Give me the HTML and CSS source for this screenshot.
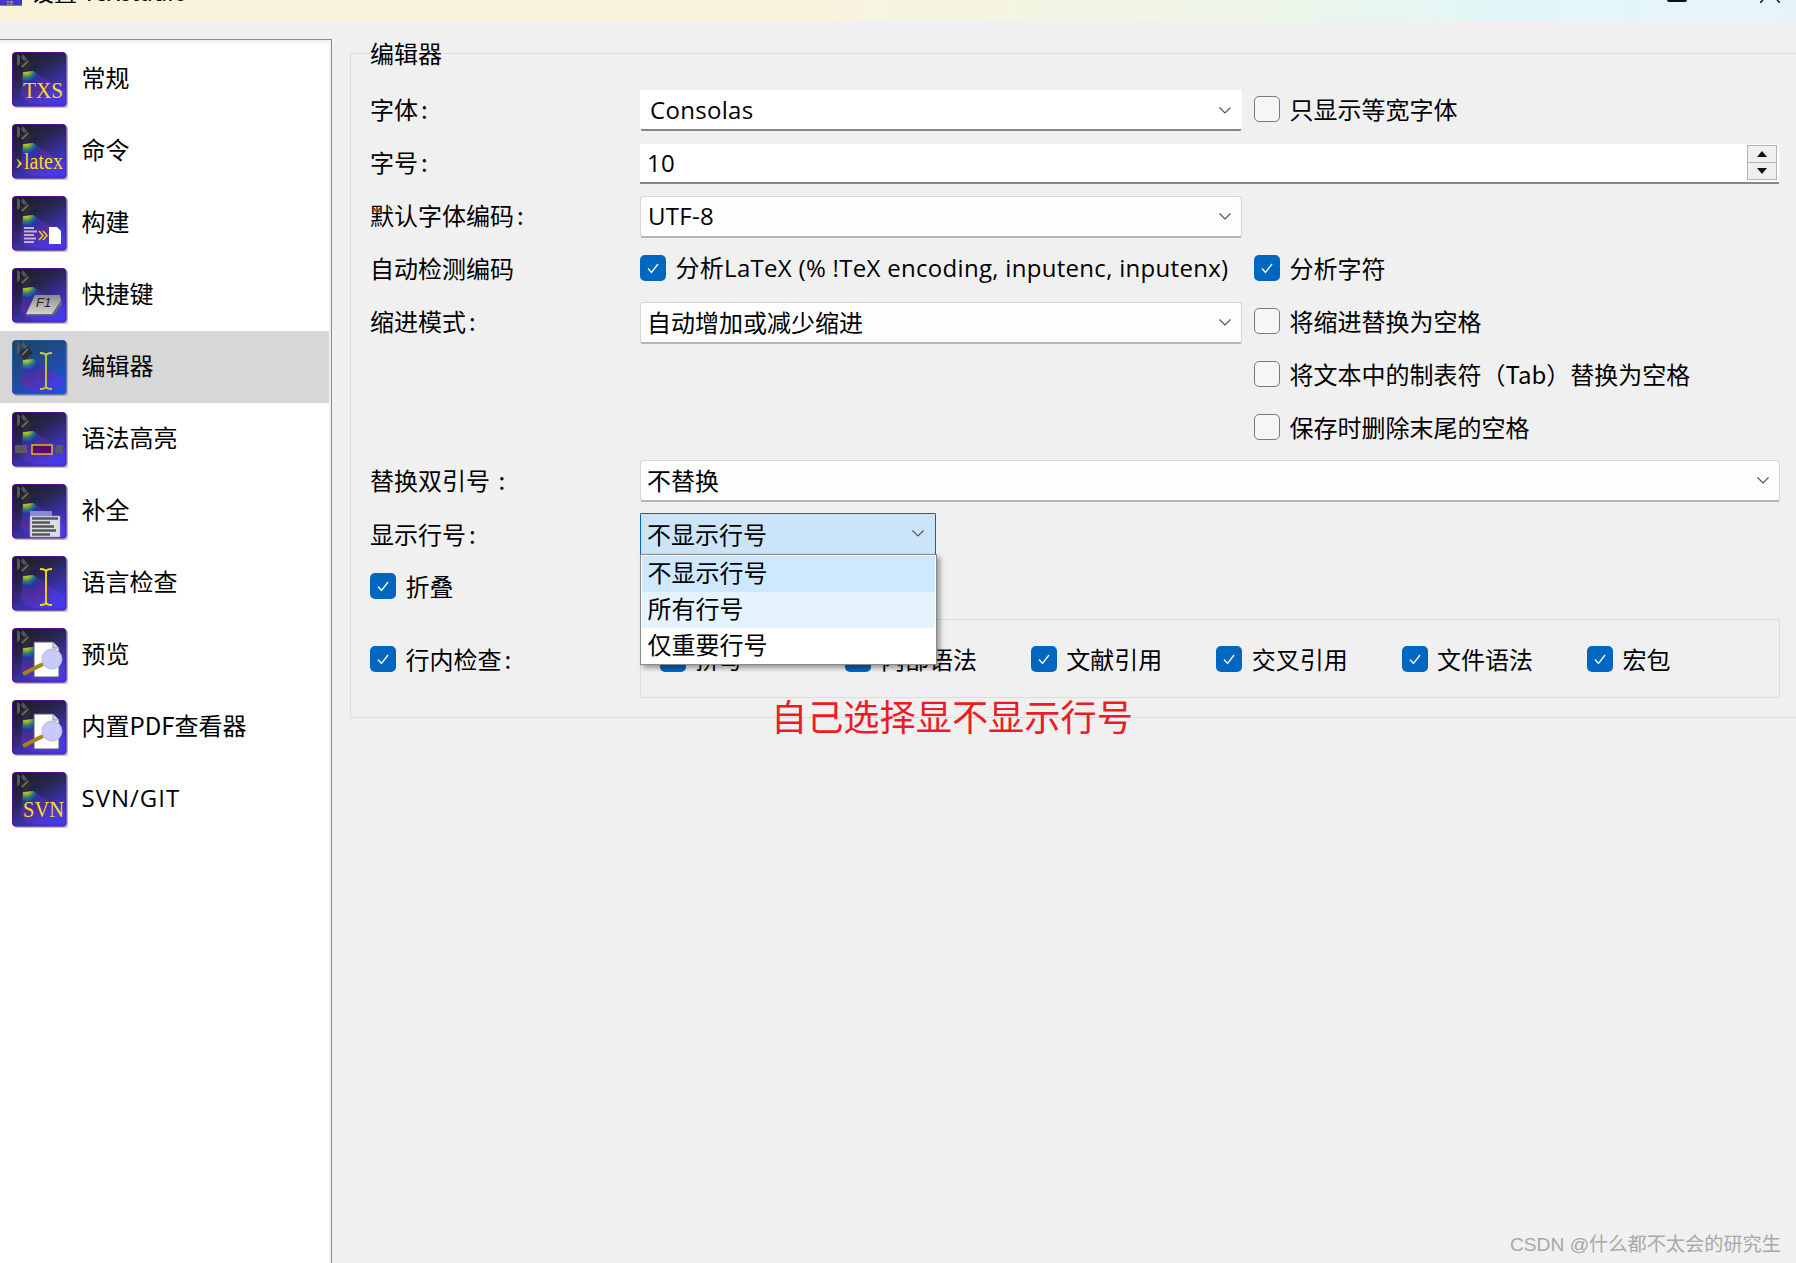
FILE: index.html
```html
<!DOCTYPE html>
<html lang="zh-CN">
<head>
<meta charset="utf-8">
<title>设置 TeXstudio</title>
<link rel="stylesheet" href="styles.css">
</head>
<body>
<svg class="defs" width="0" height="0" aria-hidden="true">
  <defs>
    <linearGradient id="bg" x1="0.15" y1="0" x2="0.75" y2="1">
      <stop offset="0" stop-color="#1d1d20"/><stop offset="0.35" stop-color="#26244a"/><stop offset="0.7" stop-color="#3a32a8"/><stop offset="1" stop-color="#4438ea"/>
    </linearGradient>
    <linearGradient id="bgsel" x1="0.15" y1="0" x2="0.75" y2="1">
      <stop offset="0" stop-color="#1c4560"/><stop offset="0.4" stop-color="#1f4a8c"/><stop offset="1" stop-color="#2150d8"/>
    </linearGradient>
    <radialGradient id="beam" gradientUnits="userSpaceOnUse" cx="14" cy="17" r="38">
      <stop offset="0.05" stop-color="#f4f414"/><stop offset="0.14" stop-color="#b0d820"/><stop offset="0.23" stop-color="#2a8a90"/><stop offset="0.34" stop-color="#2c34b0"/><stop offset="0.6" stop-color="#5c2a9c"/><stop offset="1" stop-color="#4a3ae0"/>
    </radialGradient>
    <linearGradient id="key" x1="0" y1="0" x2="0" y2="1">
      <stop offset="0" stop-color="#8a8a8a"/><stop offset="1" stop-color="#d4d4d4"/>
    </linearGradient>
    <symbol id="lamp" viewBox="0 0 56 56">
      <path d="M11 20 L9 42 Q12 52 30 52 Q46 52 53 42 L53 40 L21 19 Z" fill="url(#beam)" fill-opacity="0.8"/>
      <path d="M5 2 V14 L8 12 V4 Z M11 2 L18 11 L15 13 L9 5 Z" fill="#55555e"/>
      <path d="M7 12 L16 7 L21 13 L12 20 Z" fill="#2c2c32"/>
      <path d="M10 15 L16 9" stroke="#78787f" stroke-width="1.5"/>
    </symbol>
    <symbol id="base" viewBox="0 0 56 56">
      <rect x="2" y="2" width="54" height="54" rx="3" fill="#b8b8c0"/>
      <rect x="0.5" y="0.5" width="53.5" height="53.5" rx="3" fill="url(#bg)" stroke="#5a0a8c"/>
      <use href="#lamp" width="56" height="56"/>
    </symbol>
    <symbol id="basesel" viewBox="0 0 56 56">
      <rect x="2" y="2" width="54" height="54" rx="3" fill="#a9a9b2"/>
      <rect x="0.5" y="0.5" width="53.5" height="53.5" rx="3" fill="url(#bgsel)" stroke="#2a50a0"/>
      <use href="#lamp" width="56" height="56"/>
    </symbol>
    <symbol id="ibeam" viewBox="0 0 56 56">
      <path d="M28 13 Q34 13 34 16 Q34 13 40 13 M34 16 V46 M28 49 Q34 49 34 46 Q34 49 40 49" fill="none" stroke="currentColor" stroke-width="1.8"/>
    </symbol>
    <symbol id="glass" viewBox="0 0 56 56">
      <path d="M22 14 H41 L47 20 V49 H22 Z" fill="#fff" stroke="#5a5a6a"/>
      <path d="M41 14 V20 H47" fill="#ddd" stroke="#888"/>
      <path d="M31 36 L11 46" stroke="#a08414" stroke-width="4"/>
      <circle cx="40" cy="31" r="10" fill="#c9c9fa" stroke="#b4b4dc"/>
    </symbol>
  </defs>
</svg>

<header class="titlebar">
  <svg class="title-icon" viewBox="0 0 22 6"><rect width="22" height="6" fill="#4438c8"/><rect y="5" width="22" height="1" fill="#8878b0"/><text x="6" y="5" class="title-icon-text">TE</text></svg>
  <span class="title-text">设置 TeXstudio</span>
  <span class="win-max"></span>
  <svg class="win-close" viewBox="0 0 20 3"><path d="M0 3 L3 0 M20 3 L17 0" stroke="#222" stroke-width="1.6"/></svg>
</header>

<div class="body">
  <nav class="sidebar">
    <div class="list">
      <div class="item"><svg class="icon" viewBox="0 0 56 56"><use href="#base"/><text x="11" y="46" class="ic-serif" textLength="40" lengthAdjust="spacingAndGlyphs">TXS</text></svg><span>常规</span></div>
      <div class="item"><svg class="icon" viewBox="0 0 56 56"><use href="#base"/><text x="3" y="45" class="ic-serif">›</text><text x="12" y="45" class="ic-serif" textLength="39" lengthAdjust="spacingAndGlyphs">latex</text></svg><span>命令</span></div>
      <div class="item"><svg class="icon" viewBox="0 0 56 56"><use href="#base"/><path d="M12 32 H22 M12 35.5 H25 M12 39 H22 M12 42.5 H24 M12 46 H22" stroke="#bcb4d0" stroke-width="2.2"/><path d="M27 35 L31 39.5 L27 44 M31 35 L35 39.5 L31 44" fill="none" stroke="#f0d010" stroke-width="1.5"/><path d="M37 31 H45 L49 35 V48 H37 Z" fill="#fff"/></svg><span>构建</span></div>
      <div class="item"><svg class="icon" viewBox="0 0 56 56"><use href="#base"/><path d="M23 27 H48 L49 33 L40 46 H14 Z" fill="url(#key)"/><path d="M14 46 L40 46 L42 47.500 H15 Z M49 33 L40 46 L42 47.500 L50 36 Z" fill="#6a6a6a"/><text x="24" y="39" class="ic-key">F1</text></svg><span>快捷键</span></div>
      <div class="item selected"><svg class="icon" viewBox="0 0 56 56"><use href="#basesel"/><use href="#ibeam" class="ibeam-sel" width="56" height="56"/></svg><span>编辑器</span></div>
      <div class="item"><svg class="icon" viewBox="0 0 56 56"><use href="#base"/><rect x="3" y="33" width="12" height="8" fill="#5a5a62"/><rect x="44" y="33" width="7" height="8" fill="#5a5a62"/><rect x="20" y="33" width="20" height="9" fill="#5a0a6a" stroke="#e8c010" stroke-width="1.4"/></svg><span>语法高亮</span></div>
      <div class="item"><svg class="icon" viewBox="0 0 56 56"><use href="#base"/><rect x="18" y="27" width="22" height="5" fill="#8a86d8"/><rect x="18" y="32" width="30" height="21" fill="#dcdce4" stroke="#a0a0b0" stroke-width="0.6"/><path d="M20 34.500 H46 M20 38.500 H38 M20 42.500 H42 M20 46.500 H44 M20 50.500 H38" stroke="#55555c" stroke-width="2.600"/></svg><span>补全</span></div>
      <div class="item"><svg class="icon" viewBox="0 0 56 56"><use href="#base"/><use href="#ibeam" class="ibeam" width="56" height="56"/></svg><span>语言检查</span></div>
      <div class="item"><svg class="icon" viewBox="0 0 56 56"><use href="#base"/><use href="#glass" width="56" height="56"/></svg><span>预览</span></div>
      <div class="item"><svg class="icon" viewBox="0 0 56 56"><use href="#base"/><use href="#glass" width="56" height="56"/></svg><span>内置PDF查看器</span></div>
      <div class="item"><svg class="icon" viewBox="0 0 56 56"><use href="#base"/><text x="11" y="45" class="ic-serif" textLength="41" lengthAdjust="spacingAndGlyphs">SVN</text></svg><span class="nav-latin">SVN/GIT</span></div>
    </div>
  </nav>

  <main class="content">
    <section class="group">
      <div class="legend">编辑器</div>

      <div class="row row-up">
        <label class="lbl">字体<span class="colon">:</span></label>
        <div class="combo combo-flat"><span class="latin">Consolas</span><svg class="chev" viewBox="0 0 12 7"><path d="M0.5 0.5 L6 6 L11.500 0.5"/></svg></div>
        <div class="check"><i class="box"></i><span>只显示等宽字体</span></div>
      </div>

      <div class="row row-up">
        <label class="lbl">字号<span class="colon">:</span></label>
        <div class="spin"><span class="latin">10</span>
          <div class="spin-btns"><b><em class="up"></em></b><b><em class="down"></em></b></div>
        </div>
      </div>

      <div class="row row-up">
        <label class="lbl">默认字体编码<span class="colon">:</span></label>
        <div class="combo"><span class="latin">UTF-8</span><svg class="chev" viewBox="0 0 12 7"><path d="M0.5 0.5 L6 6 L11.500 0.5"/></svg></div>
      </div>

      <div class="row row-up">
        <label class="lbl">自动检测编码</label>
        <div class="slot"><div class="check"><i class="box on"><svg viewBox="0 0 26 26"><path d="M8 13.500 L11.500 17.500 L18 9"/></svg></i><span class="latin">分析LaTeX (% !TeX encoding, inputenc, inputenx)</span></div></div>
        <div class="check"><i class="box on"><svg viewBox="0 0 26 26"><path d="M8 13.500 L11.500 17.500 L18 9"/></svg></i><span>分析字符</span></div>
      </div>

      <div class="row row-up">
        <label class="lbl">缩进模式<span class="colon">:</span></label>
        <div class="combo"><span>自动增加或减少缩进</span><svg class="chev" viewBox="0 0 12 7"><path d="M0.5 0.5 L6 6 L11.500 0.5"/></svg></div>
        <div class="check"><i class="box"></i><span>将缩进替换为空格</span></div>
      </div>

      <div class="row row-up row-right">
        <div class="check"><i class="box"></i><span class="mixed">将文本中的制表符（Tab）替换为空格</span></div>
      </div>

      <div class="row row-up row-right">
        <div class="check"><i class="box"></i><span>保存时删除末尾的空格</span></div>
      </div>

      <div class="row row-51 row-up1">
        <label class="lbl">替换双引号 <span class="colon">:</span></label>
        <div class="combo combo-wide"><span>不替换</span><svg class="chev" viewBox="0 0 12 7"><path d="M0.5 0.5 L6 6 L11.500 0.5"/></svg></div>
      </div>

      <div class="row row-55">
        <label class="lbl">显示行号<span class="colon">:</span></label>
        <div class="combo combo-open"><span>不显示行号</span><svg class="chev" viewBox="0 0 12 7"><path d="M0.5 0.5 L6 6 L11.500 0.5"/></svg>
          <ul class="popup">
            <li class="cur">不显示行号</li>
            <li class="hov">所有行号</li>
            <li>仅重要行号</li>
          </ul>
        </div>
      </div>

      <div class="row row-50">
        <div class="check"><i class="box on"><svg viewBox="0 0 26 26"><path d="M8 13.500 L11.500 17.500 L18 9"/></svg></i><span>折叠</span></div>
      </div>

      <div class="row row-inline">
        <div class="check lbl"><i class="box on"><svg viewBox="0 0 26 26"><path d="M8 13.500 L11.500 17.500 L18 9"/></svg></i><span>行内检查<span class="colon">:</span></span></div>
        <div class="inline-box">
          <div class="check"><i class="box on"><svg viewBox="0 0 26 26"><path d="M8 13.500 L11.500 17.500 L18 9"/></svg></i><span>拼写</span></div>
          <div class="check"><i class="box on"><svg viewBox="0 0 26 26"><path d="M8 13.500 L11.500 17.500 L18 9"/></svg></i><span>内部语法</span></div>
          <div class="check"><i class="box on"><svg viewBox="0 0 26 26"><path d="M8 13.500 L11.500 17.500 L18 9"/></svg></i><span>文献引用</span></div>
          <div class="check"><i class="box on"><svg viewBox="0 0 26 26"><path d="M8 13.500 L11.500 17.500 L18 9"/></svg></i><span>交叉引用</span></div>
          <div class="check"><i class="box on"><svg viewBox="0 0 26 26"><path d="M8 13.500 L11.500 17.500 L18 9"/></svg></i><span>文件语法</span></div>
          <div class="check"><i class="box on"><svg viewBox="0 0 26 26"><path d="M8 13.500 L11.500 17.500 L18 9"/></svg></i><span>宏包</span></div>
        </div>
      </div>
    </section>
  </main>
</div>

<div class="note">自己选择显不显示行号</div>
<div class="watermark">CSDN @什么都不太会的研究生</div>
</body>
</html>
```

FILE: styles.css
```css
* { box-sizing: border-box; }
html, body { margin: 0; height: 100%; }
body {
  position: relative;
  width: 1796px;
  height: 1263px;
  overflow: hidden;
  background: #f0f0f0;
  color: #000;
  font-family: "Noto Sans CJK SC", "Noto Sans", sans-serif;
  font-size: 24px;
  display: flex;
  flex-direction: column;
}
.defs { position: absolute; }
.latin { font-family: "Open Sans", "Noto Sans CJK SC", sans-serif; font-size: 24px; letter-spacing: 0.3px; }
.mixed { font-family: "Noto Sans CJK SC", sans-serif; }
.colon { margin-left: 3px; }

/* title bar */
.titlebar {
  height: 21px;
  flex: none;
  overflow: hidden;
  display: flex;
  align-items: flex-start;
  background: linear-gradient(90deg, #f9f3da 0%, #f8f3dd 45%, #eef6e8 70%, #e2f6f6 82%, #e6f4fa 100%);
}
.title-icon { width: 22px; height: 6px; flex: none; }
.title-icon-text { font: 6px "Liberation Serif", serif; fill: #e8d020; }
.title-text { margin: -25px 0 0 9px; font-size: 23px; line-height: 32px; }
.win-max { margin-left: auto; width: 20px; height: 2px; margin-right: 73px; background: #111; border-radius: 0 0 2px 2px; }
.win-close { width: 20px; height: 3px; margin-right: 16px; flex: none; }

.body { flex: 1; display: flex; min-height: 0; }

/* sidebar */
.sidebar {
  width: 332px;
  flex: none;
  margin-top: 18px;
  padding: 3px 2px 0 0;
  border-top: 1px solid #8a8a94;
  border-right: 1px solid #8a8a94;
  background: #f2f2f2;
}
.list { height: 100%; background: #fff; }
.item {
  height: 72px;
  display: flex;
  align-items: center;
  gap: 13.5px;
  padding-left: 12px;
  line-height: 1;
}
.item span { padding-bottom: 4px; }
.item .nav-latin { font-family: "Open Sans", sans-serif; letter-spacing: 1px; padding-bottom: 2px; }
.item.selected { background: #d7d7d7; }
.icon { width: 56px; height: 56px; margin-top: 2px; flex: none; }
.ic-serif { font: 24px "Liberation Serif", serif; fill: #f5de20; }
.ic-key { font: italic 13px "Liberation Sans", sans-serif; fill: #222; }
.ibeam { color: #f7dc10; }
.ibeam-sel { color: #c4d034; }

/* group box */
.content { flex: 1; padding: 32px 0 0 18px; min-width: 0; }
.group {
  height: 665px;
  padding-left: 19px;
  border: 1px solid #dcdcdc;
  border-right: 0;
}
.legend {
  height: 34px;
  width: 72px;
  margin-top: -18px;
  margin-bottom: 14px;
  line-height: 34px;
  background: #f0f0f0;
}
.row { height: 53px; display: flex; align-items: center; }
.row-51 { height: 51px; }
.row-55 { height: 55px; }
.row-50 { height: 50px; }
.row-right { padding-left: 884px; }
.row-inline { height: 79px; margin-top: 8px; }
.lbl { width: 270px; flex: none; line-height: 1; }
.row-up .lbl { margin-bottom: 4px; }
.row-up1 .lbl { margin-bottom: 2px; }
.row-up .check { margin-bottom: 4px; }

/* combos */
.combo {
  position: relative;
  width: 602px;
  height: 42px;
  flex: none;
  display: flex;
  align-items: center;
  justify-content: space-between;
  padding: 0 9px 0 7px;
  background: #fdfdfd;
  border: 1px solid #d6d6d6;
  border-bottom: 2px solid #b4b4b4;
  border-radius: 3px;
}
.combo > span { padding-bottom: 2px; }
.combo > span:not(.latin) { margin-left: -1px; }
.combo-flat { border-color: #fff; border-bottom: 2px solid #868686; height: 41px; padding-left: 9px; background: #fff; }
.combo-wide { width: 1140px; }
.combo-open {
  width: 296px;
  background: #cce4f7;
  border: 1px solid #0067c0;
  border-radius: 1px;
}
.combo-open > span { padding-bottom: 0; }
.chev { width: 12px; height: 7px; margin-right: 1px; }
.chev path { fill: none; stroke: #555; stroke-width: 1.2; }
.combo-open .chev { margin-right: 2px; }

/* dropdown list: floats over the rows below */
.popup {
  position: absolute;
  left: -1px;
  top: 100%;
  margin: 0;
  width: 297px;
  height: 111px;
  padding: 1px;
  list-style: none;
  background: #fff;
  border: 1px solid #8a8a8a;
  box-shadow: 3px 3px 5px rgba(0,0,0,.38);
  z-index: 5;
}
.popup li { height: 36px; line-height: 32px; padding-left: 5.5px; }
.popup .cur { background: #cde8ff; }
.popup .hov { background: #e5f3ff; }

/* spin */
.spin {
  width: 1139px;
  height: 40px;
  flex: none;
  display: flex;
  align-items: center;
  justify-content: space-between;
  padding: 0 2px 0 7px;
  background: #fff;
  border-bottom: 2px solid #868686;
}
.spin-btns { width: 30px; height: 35px; display: flex; flex-direction: column; border: 1px solid #b4b4b4; background: #f0f0f0; }
.spin-btns b { flex: 1; display: flex; align-items: center; justify-content: center; }
.spin-btns b + b { border-top: 1px solid #b4b4b4; }
.up { width: 0; height: 0; border: 5px solid transparent; border-top: 0; border-bottom: 6px solid #111; }
.down { width: 0; height: 0; border: 5px solid transparent; border-bottom: 0; border-top: 6px solid #111; }

/* check boxes */
.slot { width: 614px; flex: none; }
.row > .combo + .check { margin-left: 12px; }
.check { display: flex; align-items: center; gap: 9.5px; line-height: 1; white-space: nowrap; }
.box {
  width: 26px;
  height: 26px;
  flex: none;
  border: 1.5px solid #7a7a7a;
  border-radius: 5px;
  background: #f6f6f6;
}
.box.on { border: 0; background: #0067c0; }
.box svg { display: block; width: 26px; height: 26px; }
.box svg path { fill: none; stroke: #fff; stroke-width: 1.3; }

.inline-box {
  width: 1140px;
  height: 79px;
  flex: none;
  display: grid;
  grid-template-columns: repeat(6, 185.4px);
  align-items: center;
  padding-left: 19px;
  border: 1px solid #dcdcdc;
}

/* annotations laid over the screenshot */
.note {
  position: absolute;
  left: 771px;
  top: 689px;
  font-size: 36.2px;
  line-height: 52px;
  color: #ed1c24;
  z-index: 6;
}
.watermark {
  position: absolute;
  right: 15px;
  top: 1231px;
  font-family: "Liberation Sans", "Noto Sans CJK SC", sans-serif;
  font-size: 19.2px;
  line-height: 28px;
  color: #a8a8a8;
}
```
